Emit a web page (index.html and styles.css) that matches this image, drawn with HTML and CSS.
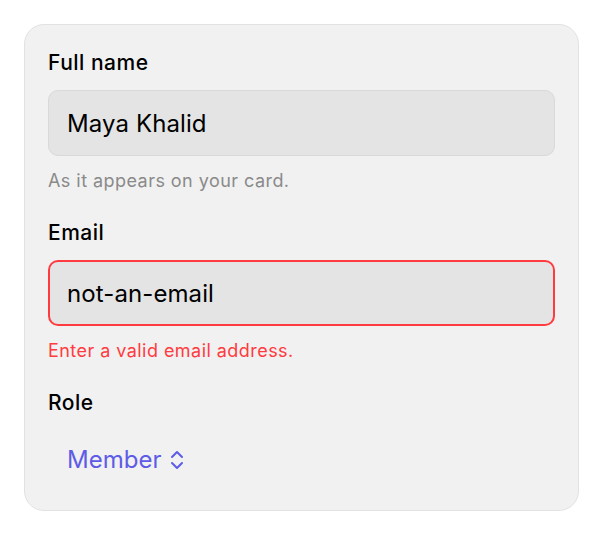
FILE: index.html
```html
<!DOCTYPE html>
<html lang="en">
<head>
<meta charset="utf-8">
<title>Form</title>
<link rel="stylesheet" href="styles.css">
</head>
<body>
<form class="card">
  <div class="field">
    <label class="label" for="name">Full name</label>
    <div class="input" id="name">Maya Khalid</div>
    <p class="hint">As it appears on your card.</p>
  </div>
  <div class="field">
    <label class="label" for="email">Email</label>
    <div class="input invalid" id="email">not-an-email</div>
    <p class="hint error">Enter a valid email address.</p>
  </div>
  <div class="field">
    <span class="label">Role</span>
    <div class="picker">
      <span>Member</span>
      <svg class="chev" width="16" height="22" viewBox="0 0 16 22" fill="none" stroke="currentColor" stroke-width="2" stroke-linecap="round" stroke-linejoin="round"><polyline points="3,8 8,3 13,8"/><polyline points="3,14 8,19 13,14"/></svg>
    </div>
  </div>
</form>
</body>
</html>
```
FILE: styles.css
```css
* { box-sizing: border-box; }
html, body { margin: 0; background: #ffffff; }
body {
  padding: 24px 24px 0 24px;
  font-family: Inter, "Noto Sans", sans-serif;
  color: #000;
}
.card {
  width: 555px;
  background: #f1f1f1;
  border: 1px solid #e2e2e2;
  border-radius: 20px;
  padding: 26px 23px 30px 23px;
  display: flex;
  flex-direction: column;
}
.field { display: flex; flex-direction: column; }
.field + .field { margin-top: 29px; }
.label {
  font-size: 21px;
  line-height: 24px;
  font-weight: 500;
  letter-spacing: 0.5px;
}
.input {
  margin-top: 15px;
  height: 66px;
  background: #e4e4e4;
  border: 1px solid #d9d9d9;
  border-radius: 10px;
  padding: 0 18px;
  display: flex;
  align-items: center;
  font-size: 24px;
  letter-spacing: 0.1px;
}
.input.invalid {
  border: 2px solid #ff3b40;
  padding: 0 17px;
}
.hint {
  margin: 14px 0 0 0;
  font-size: 18px;
  line-height: 22px;
  letter-spacing: 0.45px;
  color: #8a8a8a;
}
.hint.error { color: #ff3b40; }
.picker {
  margin-top: 25px;
  padding-left: 19px;
  display: flex;
  align-items: center;
  gap: 8px;
  color: #5e5ce6;
  font-size: 24px;
  line-height: 40px;
}
.chev { display: block; }
```
